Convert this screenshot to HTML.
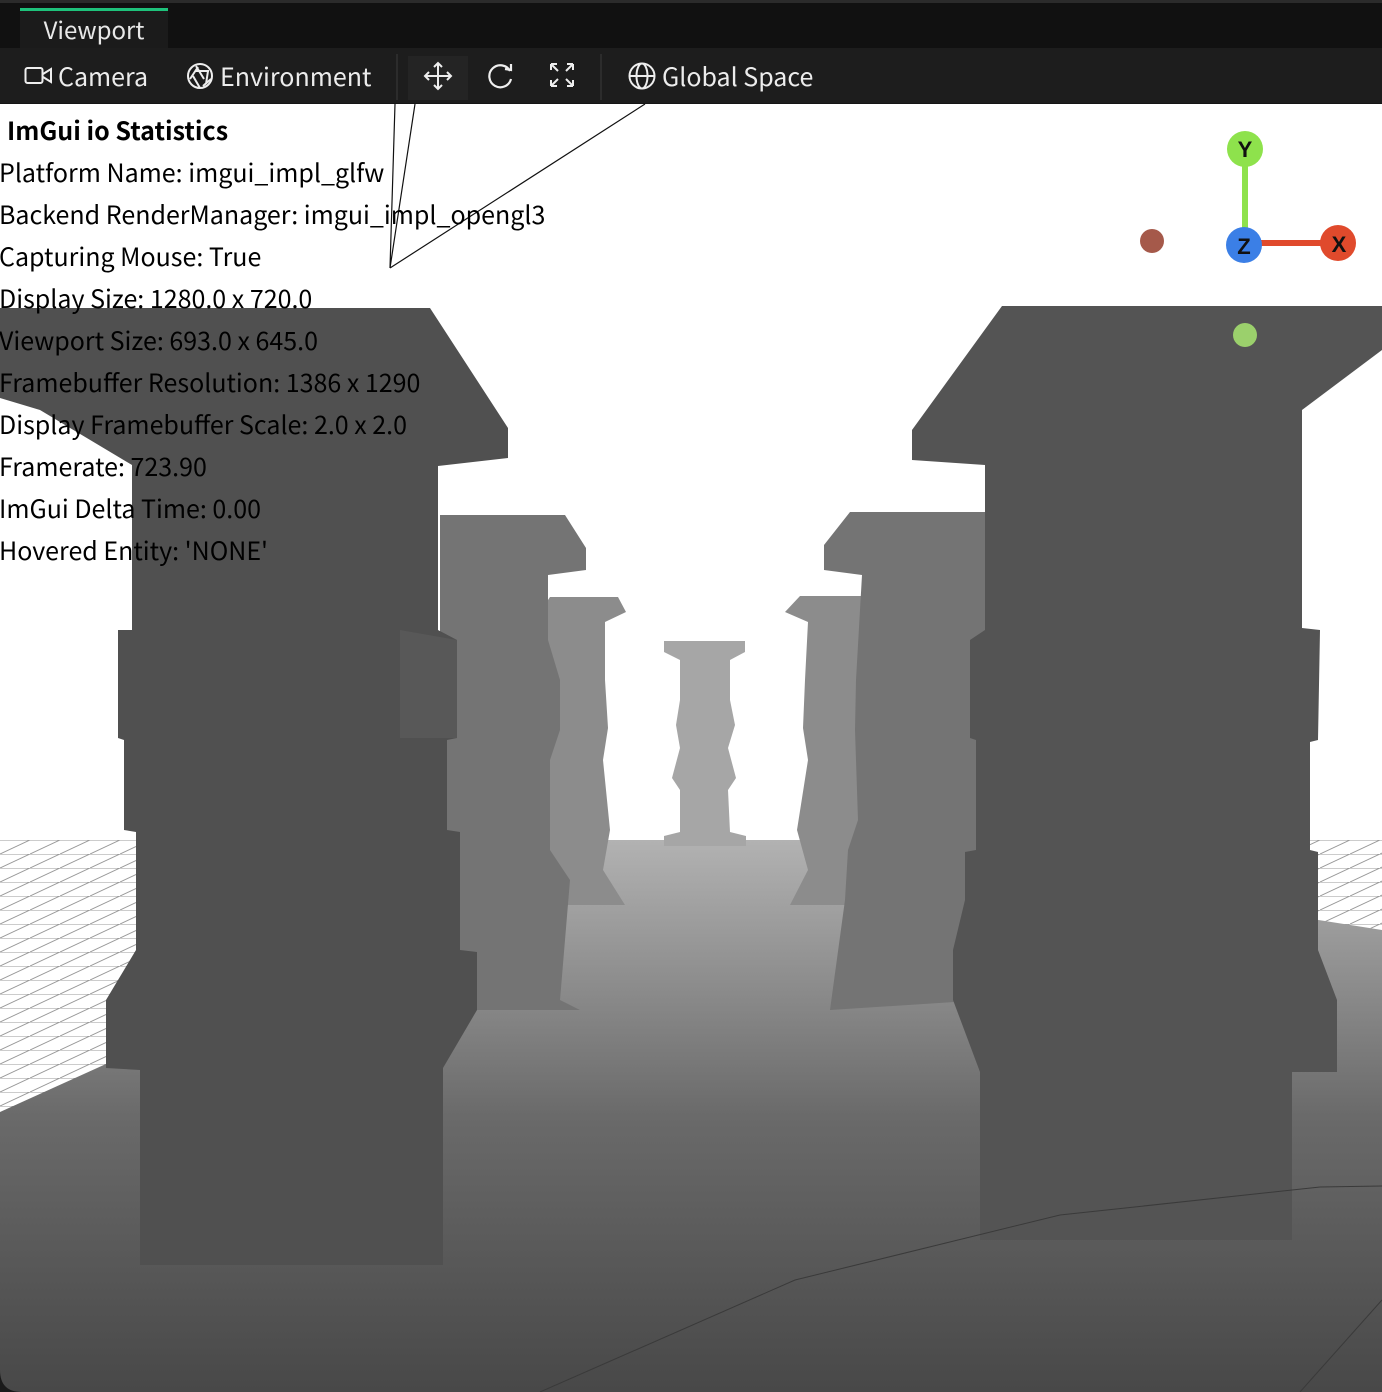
<!DOCTYPE html>
<html><head><meta charset="utf-8"><style>
body{margin:0;width:1382px;height:1392px;overflow:hidden;background:#111;font-family:"Noto Sans CJK SC","Liberation Sans",sans-serif}
#top{position:absolute;left:0;top:0;width:1382px;height:48px;background:#111;border-top:3px solid #2b2b2b;box-sizing:border-box}
#tab{position:absolute;left:20px;top:5px;width:148px;height:43px;background:#1b1b1b;border-top:3px solid #1ec27b;box-sizing:border-box;color:#e8e8e8;font-size:24px;line-height:36px;text-align:center}
#bar{position:absolute;left:0;top:48px;width:1382px;height:55px;background:#1d1d1d;border-bottom:2px solid #151515;color:#ececec;font-size:25px}
.t{position:absolute;top:12px;line-height:32px}
.sep{position:absolute;top:6px;width:2px;height:46px;background:#2c2c2c}
#scene{position:absolute;left:0;top:104px}
.s{position:absolute;left:-1px;color:#000;font-size:25px;line-height:30px;white-space:nowrap}
</style></head><body>
<div id="top"><div id="tab">Viewport</div></div>
<div id="bar">
<svg style="position:absolute;left:24px;top:17px" width="30" height="22" viewBox="0 0 30 22" fill="none" stroke="#eee" stroke-width="2"><rect x="1.5" y="3" width="17" height="15" rx="2"/><path d="M19 9 L27 4 V17 L19 12"/></svg>
<div class="t" style="left:58px">Camera</div>
<svg style="position:absolute;left:186px;top:14px" width="28" height="28" viewBox="0 0 28 28" fill="none" stroke="#eee" stroke-width="2"><circle cx="14" cy="14" r="12"/><path d="M10 4 L18 17 M23 9 L9 9 M25 17 L17 24 M14 26 L7 14 M4 17 L12 5 M20 22 L22 9"/></svg>
<div class="t" style="left:220px">Environment</div>
<div class="sep" style="left:396px"></div>
<div style="position:absolute;left:408px;top:8px;width:60px;height:44px;background:#242424"></div>
<svg style="position:absolute;left:423px;top:13px" width="30" height="30" viewBox="0 0 30 30" fill="none" stroke="#eee" stroke-width="2"><path d="M15 2 V28 M2 15 H28 M11 6 L15 2 L19 6 M11 24 L15 28 L19 24 M6 11 L2 15 L6 19 M24 11 L28 15 L24 19"/></svg>
<svg style="position:absolute;left:486px;top:13px" width="30" height="30" viewBox="0 0 30 30" fill="none" stroke="#eee" stroke-width="2.2"><path d="M24 10 A11 11 0 1 0 25 18"/><path d="M19 8 L25 9 L25 3"/></svg>
<svg style="position:absolute;left:548px;top:13px" width="28" height="28" viewBox="0 0 28 28" fill="none" stroke="#eee" stroke-width="2"><path d="M3 3 L10 10 M3 3 H9 M3 3 V9 M25 3 L18 10 M25 3 H19 M25 3 V9 M3 25 L10 18 M3 25 H9 M3 25 V19 M25 25 L18 18 M25 25 H19 M25 25 V19"/></svg>
<div class="sep" style="left:600px"></div>
<svg style="position:absolute;left:627px;top:13px" width="30" height="30" viewBox="0 0 30 30" fill="none" stroke="#eee" stroke-width="2"><circle cx="15" cy="15" r="12.5"/><ellipse cx="15" cy="15" rx="5.5" ry="12.5"/><path d="M2.5 15 H27.5"/></svg>
<div class="t" style="left:662px">Global Space</div>
</div>
<svg id="scene" width="1382" height="1288" viewBox="0 104 1382 1288">
<defs>
<linearGradient id="fl" x1="0" y1="840" x2="0" y2="1392" gradientUnits="userSpaceOnUse"><stop offset="0" stop-color="#b2b2b2"/><stop offset="0.5" stop-color="#6a6a6a"/><stop offset="1" stop-color="#484848"/></linearGradient>
<pattern id="gr" width="30" height="14" patternUnits="userSpaceOnUse"><path d="M0 0 H30 M0 14 L30 0" stroke="#999" stroke-width="1" fill="none"/></pattern>
</defs>
<rect x="0" y="104" width="1382" height="1288" fill="#fff"/>
<polygon points="0,840 610,840 0,1112" fill="url(#gr)"/>
<polygon points="780,840 1382,840 1382,930" fill="url(#gr)"/>
<polygon points="0,1112 600,840 810,840 1382,930 1382,1392 0,1392" fill="url(#fl)"/>
<g fill="#a6a6a6"><polygon points="664,641 745,641 745,652 730,660 730,700 735,725 728,748 736,778 728,790 730,832 746,836 746,846 664,846 664,836 680,832 680,790 672,778 680,748 676,725 680,700 680,660 664,652"/></g>
<g fill="#8c8c8c"><polygon points="550,597 618,597 626,612 605,622 605,680 608,728 603,760 610,830 603,870 625,905 560,905 548,880 548,600"/>
<polygon points="800,596 862,596 862,905 790,905 808,870 797,830 808,760 803,728 805,680 808,622 785,612"/></g>
<g fill="#747474"><polygon points="440,515 565,515 586,548 586,570 548,575 548,640 560,680 560,730 550,760 550,850 570,880 560,1000 580,1010 440,1010"/>
<polygon points="850,512 985,512 985,1000 830,1010 845,900 848,850 858,820 855,730 856,680 862,575 824,570 824,545"/></g>
<polygon fill="#505050" points="0,308 430,308 508,428 508,458 438,466 438,630 457,640 457,738 447,740 447,830 460,832 460,950 477,952 477,1010 443,1068 443,1265 140,1265 140,1070 106,1068 106,1000 136,950 136,832 124,830 124,740 118,738 118,630 132,630 132,465 40,410 0,398"/>
<polygon fill="#585858" points="400,630 457,640 457,738 400,738"/>
<polygon fill="#545454" points="1002,306 1382,306 1382,350 1302,410 1302,628 1320,630 1318,740 1310,742 1310,850 1318,852 1318,950 1337,1000 1337,1072 1292,1072 1292,1240 980,1240 980,1072 953,1000 953,950 965,900 965,852 976,850 976,740 970,738 970,640 985,630 985,465 912,460 912,430"/>
<g stroke="#111" stroke-width="1.2" fill="none"><path d="M415 104 L390 268 M395 104 L390 268 M645 104 L390 268"/></g>
<path d="M540 1392 L795 1280 L1060 1215 L1320 1187 L1382 1186 M1382 1300 L1300 1392" stroke="#3a3a3a" stroke-width="1" fill="none"/>
<line x1="1245" y1="149" x2="1245" y2="245" stroke="#8ee24c" stroke-width="6"/>
<line x1="1245" y1="243" x2="1338" y2="243" stroke="#e04a2c" stroke-width="6"/>
<circle cx="1152" cy="241" r="12" fill="#a5594a"/>
<circle cx="1245" cy="335" r="12" fill="#9bd06c"/>
<circle cx="1245" cy="149" r="18" fill="#8ee24c"/>
<circle cx="1338" cy="243" r="18" fill="#e04a2c"/>
<circle cx="1244" cy="245" r="18" fill="#3b7fe6"/>
<g font-family="Liberation Sans,sans-serif" font-weight="bold" font-size="22" fill="#111" text-anchor="middle"><text x="1245" y="157">Y</text><text x="1339" y="252">X</text><text x="1244" y="254">Z</text></g>
<path d="M0 1370 Q0 1392 22 1392 L0 1392Z" fill="#1a1a1a"/>
</svg>
<div class="s" style="top:115px;left:7px;font-weight:bold">ImGui io Statistics</div>
<div class="s" style="top:157px">Platform Name: imgui_impl_glfw</div>
<div class="s" style="top:199px">Backend RenderManager: imgui_impl_opengl3</div>
<div class="s" style="top:241px">Capturing Mouse: True</div>
<div class="s" style="top:283px">Display Size: 1280.0 x 720.0</div>
<div class="s" style="top:325px">Viewport Size: 693.0 x 645.0</div>
<div class="s" style="top:367px">Framebuffer Resolution: 1386 x 1290</div>
<div class="s" style="top:409px">Display Framebuffer Scale: 2.0 x 2.0</div>
<div class="s" style="top:451px">Framerate: 723.90</div>
<div class="s" style="top:493px">ImGui Delta Time: 0.00</div>
<div class="s" style="top:535px">Hovered Entity: 'NONE'</div>
</body></html>
